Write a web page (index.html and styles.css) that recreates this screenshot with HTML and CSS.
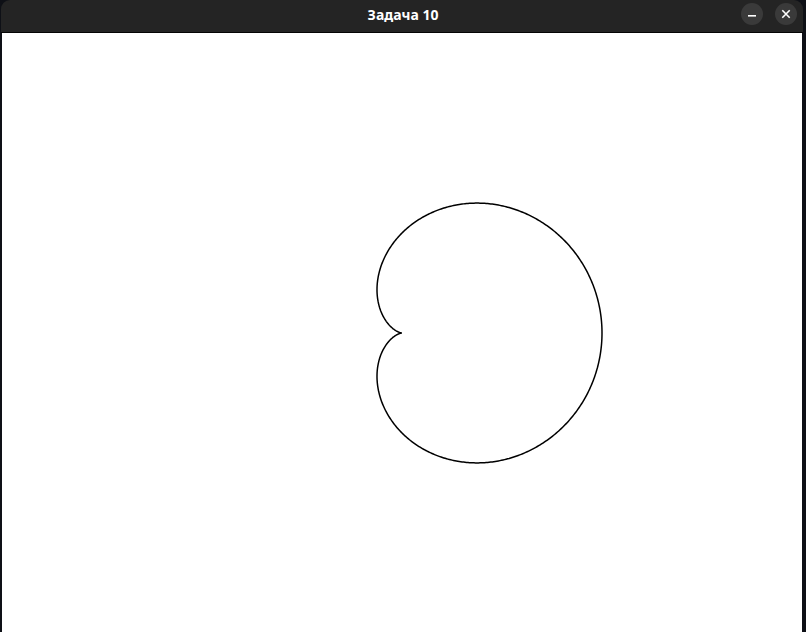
FILE: index.html
```html
<!DOCTYPE html>
<html lang="ru">
<head>
<meta charset="utf-8">
<title>Задача 10</title>
<link rel="stylesheet" href="styles.css">
</head>
<body>
<div class="window">
  <header class="titlebar">
    <div class="title">Задача 10</div>
    <div class="controls">
      <button class="ctl" aria-label="Свернуть">
        <svg width="10" height="10" viewBox="0 0 10 10"><rect x="1" y="6" width="8" height="1.6" fill="#ffffff"/></svg>
      </button>
      <button class="ctl" aria-label="Закрыть">
        <svg width="10" height="10" viewBox="0 0 10 10"><path d="M1.3 1.3 L8.7 8.7 M8.7 1.3 L1.3 8.7" stroke="#ffffff" stroke-width="1.6" fill="none"/></svg>
      </button>
    </div>
  </header>
  <main class="canvas">
    <svg class="plot" width="800" height="599" viewBox="0 0 800 599">
      <path id="cardioid" d="" fill="none" stroke="#000000" stroke-width="1.5"/>
    </svg>
  </main>
</div>
<script src="script.js"></script>
</body>
</html>
```

FILE: styles.css
```css
html, body {
  margin: 0;
  padding: 0;
}
body {
  width: 806px;
  height: 632px;
  overflow: hidden;
  background: #0e1016;
  font-family: "Noto Sans", "Open Sans", sans-serif;
}
.window {
  margin-left: 1px;
  width: 802px;
  height: 632px;
  display: flex;
  flex-direction: column;
}
.titlebar {
  height: 32px;
  flex: 0 0 32px;
  background: #242424;
  border-radius: 9px 9px 0 0;
  border-bottom: 1px solid #050505;
  display: flex;
  align-items: center;
  justify-content: center;
  position: relative;
}
.title {
  color: #ffffff;
  font-weight: 700;
  font-size: 14px;
  letter-spacing: 0;
  margin-left: 2px;
  margin-top: -3px;
}
.controls {
  position: absolute;
  right: 6px;
  top: 3px;
  display: flex;
  gap: 12px;
}
.ctl {
  width: 22px;
  height: 22px;
  border-radius: 50%;
  border: 0;
  padding: 0;
  background: #3a3a3a;
  display: flex;
  align-items: center;
  justify-content: center;
}
.canvas {
  flex: 1;
  background: #ffffff;
  margin-left: 1px;
  width: 800px;
}
.plot {
  display: block;
}
```

FILE: script.js
```js
(function () {
  var a = 100, cx = 400, cy = 300, n = 720, d = "";
  for (var i = 0; i <= n; i++) {
    var t = (i / n) * 2 * Math.PI;
    var r = a * (1 + Math.cos(t));
    var x = cx + r * Math.cos(t);
    var y = cy + r * Math.sin(t);
    d += (i === 0 ? "M" : "L") + x.toFixed(2) + " " + y.toFixed(2);
  }
  document.getElementById("cardioid").setAttribute("d", d + "Z");
})();
```
